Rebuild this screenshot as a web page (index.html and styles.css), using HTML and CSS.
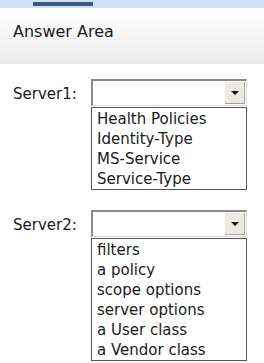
FILE: index.html
```html
<!DOCTYPE html>
<html lang="en">
<head>
    <meta charset="UTF-8">
    <meta name="viewport" content="width=device-width, initial-scale=1.0">
    <title>Answer Area</title>
    <link rel="stylesheet" href="styles.css">
</head>
<body>
    <div class="top-bar">
        <div class="top-dots"></div>
    </div>

    <div class="header">
        <h1>Answer Area</h1>
    </div>

    <div class="answer-row">
        <span class="label">Server1:</span>
        <div class="dropdown">
            <div class="select-box">
                <span class="select-value"></span>
                <span class="select-button"><span class="arrow"></span></span>
            </div>
            <ul class="option-list">
                <li>Health Policies</li>
                <li>Identity-Type</li>
                <li>MS-Service</li>
                <li>Service-Type</li>
            </ul>
        </div>
    </div>

    <div class="answer-row second">
        <span class="label">Server2:</span>
        <div class="dropdown">
            <div class="select-box">
                <span class="select-value"></span>
                <span class="select-button"><span class="arrow"></span></span>
            </div>
            <ul class="option-list">
                <li>filters</li>
                <li>a policy</li>
                <li>scope options</li>
                <li>server options</li>
                <li>a User class</li>
                <li>a Vendor class</li>
            </ul>
        </div>
    </div>
</body>
</html>
```

FILE: styles.css
```css
body, html {
    margin: 0;
    padding: 0;
    background-color: #ffffff;
    font-family: "DejaVu Sans", Verdana, sans-serif;
    color: #1a1a1a;
}

.top-bar {
    height: 8px;
    background-color: #cde2f8;
    padding: 2px 0 0 33px;
    box-sizing: border-box;
}

.top-dots {
    width: 60px;
    height: 4px;
    background-image: radial-gradient(circle, #3d5a78 0.8px, transparent 1px);
    background-size: 2px 2px;
}

.header {
    height: 56px;
    padding: 0 13px;
    background: linear-gradient(to bottom, #ffffff, #ebebeb);
    box-sizing: border-box;
}

h1 {
    margin: 0;
    padding-top: 15px;
    font-size: 16px;
    font-weight: normal;
    line-height: 18px;
    color: #1a1a1a;
}

.answer-row {
    display: flex;
    align-items: flex-start;
    margin-top: 15px;
    padding-left: 13px;
}

.answer-row.second {
    margin-top: 20px;
}

.label {
    width: 78px;
    font-size: 15px;
    line-height: 30px;
}

.dropdown {
    width: 156px;
}

.select-box {
    display: flex;
    height: 27px;
    border-top: 2px solid #8a8a8a;
    border-left: 2px solid #8a8a8a;
    border-right: 1px solid #d8d8d8;
    border-bottom: 1px solid #d8d8d8;
    box-sizing: border-box;
    background-color: #ffffff;
}

.select-value {
    flex: 1;
}

.select-button {
    width: 19px;
    margin: 1px 1px 1px 0;
    background-color: #ece9e2;
    border-right: 1px solid #a8a49c;
    border-bottom: 1px solid #a8a49c;
    display: flex;
    align-items: center;
    justify-content: center;
}

.arrow {
    width: 0;
    height: 0;
    border-left: 4px solid transparent;
    border-right: 4px solid transparent;
    border-top: 4px solid #111111;
}

.option-list {
    list-style: none;
    margin: 1px 0 0;
    padding: 1px 5px 0;
    border: 1px solid #555555;
    font-size: 15px;
    line-height: 20px;
}
```
